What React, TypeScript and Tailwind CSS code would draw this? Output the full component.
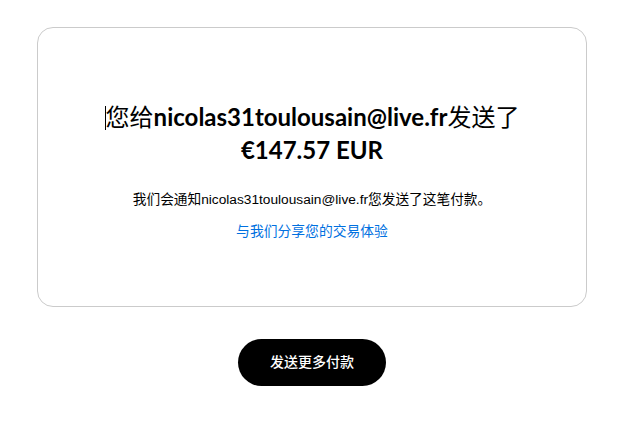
export default function App() {
  const cjk = '"Noto Sans CJK SC", sans-serif'
  return (
    <div className="min-h-[446px] w-[624px] bg-white pt-[27px]" style={{ fontFamily: '"Liberation Sans", "Noto Sans CJK SC", sans-serif' }}>
      <div className="mx-auto flex h-[280px] w-[550px] flex-col items-center rounded-2xl border border-[#cbcbcb] pt-[72px]">
        <h1 className="text-center text-[24px] leading-[32px] text-black">
          <span className="inline-block h-[24px] w-px translate-y-[4px] bg-black" />
          <span className="font-normal" style={{ fontFamily: cjk }}>您给</span>
          <span className="font-bold" style={{ fontFamily: 'Lato, "Noto Sans CJK SC", sans-serif' }}>nicolas31toulousain@live.fr</span>
          <span className="font-normal" style={{ fontFamily: cjk }}>发送了</span>
          <br />
          <span className="font-bold" style={{ fontFamily: 'Lato, sans-serif' }}>€147.57 EUR</span>
        </h1>
        <p className="mt-[23px] text-[13.7px] leading-[20px] text-black">
          我们会通知nicolas31toulousain@live.fr您发送了这笔付款。
        </p>
        <a href="#" className="mt-[12px] text-[13.8px] leading-[20px] text-[#0070e0]">
          与我们分享您的交易体验
        </a>
      </div>
      <div className="mt-[32px] flex justify-center">
        <button className="h-[47px] w-[148px] rounded-full bg-black text-[14px] font-medium text-white">
          发送更多付款
        </button>
      </div>
    </div>
  )
}
